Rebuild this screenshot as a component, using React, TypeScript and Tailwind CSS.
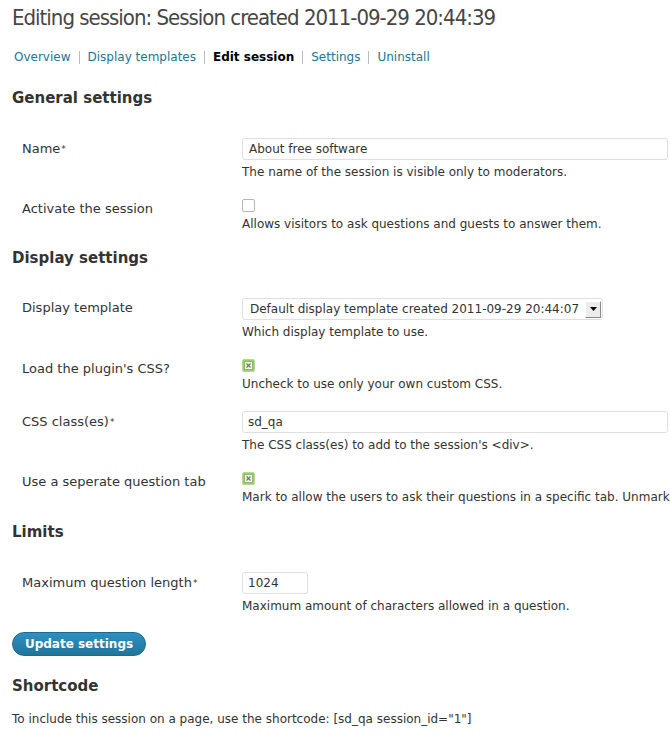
import React from "react";

const font = { fontFamily: '"DejaVu Sans", "Liberation Sans", sans-serif' };
const condensed = { fontFamily: '"DejaVu Sans Condensed", "DejaVu Sans", sans-serif', fontStretch: "condensed" as const };

function Checked() {
  return (
    <svg width="13" height="13" viewBox="0 0 13 13" className="block">
      <rect x="0.5" y="0.5" width="12" height="12" rx="1.5" fill="#9dcc6f" stroke="#b3d98f" />
      <rect x="2.5" y="2.5" width="8" height="8" fill="#f2f7ec" stroke="#7fae57" strokeWidth="0.8" />
      <path d="M4.5 4.5 L8.5 8.5 M8.5 4.5 L4.5 8.5" stroke="#6f6f6f" strokeWidth="1.1" />
    </svg>
  );
}

function Unchecked() {
  return <div className="w-[13px] h-[13px] rounded-[2px] border border-[#b5b5b5] bg-white" />;
}

function Row({
  label,
  req,
  children,
  desc,
  labelTop,
}: {
  label: string;
  req?: boolean;
  children: React.ReactNode;
  desc: string;
  labelTop: string;
}) {
  return (
    <div className="grid grid-cols-[230px_1fr]">
      <div className={`pl-[10px] text-[13px] leading-[16px] text-[#333] whitespace-nowrap ${labelTop}`}>
        {label}
        {req && <sup className="text-[9px] relative -top-[1px] ml-[1px]">*</sup>}
      </div>
      <div>
        {children}
        <div className="text-[12px] text-[#333] whitespace-nowrap mt-[4px] leading-[16px]">{desc}</div>
      </div>
    </div>
  );
}

function Sep() {
  return <span className="mx-[8px] w-[1px] h-[13px] bg-[#bbb] inline-block" />;
}

export default function App() {
  return (
    <div className="w-[670px] h-[750px] bg-white overflow-hidden" style={font}>
      <div className="pl-[12px]">
        <h2
          className="text-[22px] tracking-[-1px] text-[#464646] leading-[30px] pt-[3px] whitespace-nowrap"
          style={condensed}
        >
          Editing session: Session created 2011-09-29 20:44:39
        </h2>
        <div className="mt-[16px] ml-[2px] text-[12px] leading-[16px] whitespace-nowrap flex items-center">
          <span className="text-[#21759b]">Overview</span>
          <Sep />
          <span className="text-[#21759b]">Display templates</span>
          <Sep />
          <span className="font-bold text-black">Edit session</span>
          <Sep />
          <span className="text-[#21759b]">Settings</span>
          <Sep />
          <span className="text-[#21759b]">Uninstall</span>
        </div>

        <h3 className="mt-[24px] text-[15px] font-bold text-[#333] leading-[18px]">General settings</h3>
      </div>

      <div className="pl-[12px] mt-[31px] flex flex-col gap-[19px]">
        <Row label="Name" req desc="The name of the session is visible only to moderators." labelTop="pt-[3px]">
          <div className="h-[22px] w-[426px] border border-[#dfdfdf] rounded-[3px] text-[12px] text-[#333] pl-[6px] leading-[20px]">
            About free software
          </div>
        </Row>
        <Row label="Activate the session" desc="Allows visitors to ask questions and guests to answer them." labelTop="pt-[2px]">
          <Unchecked />
        </Row>
      </div>

      <div className="pl-[12px]">
        <h3 className="mt-[17px] text-[15px] font-bold text-[#333] leading-[18px]">Display settings</h3>
      </div>

      <div className="pl-[12px] mt-[31px] flex flex-col gap-[19px]">
        <Row label="Display template" desc="Which display template to use." labelTop="pt-[2px]">
          <div className="h-[22px] w-[361px] border border-[#dfdfdf] rounded-[3px] text-[12px] text-[#333] pl-[7px] leading-[20px] flex items-center justify-between pr-[1px]">
            <span>Default display template created 2011-09-29 20:44:07</span>
            <div className="w-[16px] h-[17px] bg-[#ececec] border-t border-l border-t-white border-l-white border-r border-b border-r-[#888] border-b-[#888] flex items-center justify-center">
              <svg width="7" height="4" viewBox="0 0 7 4">
                <path d="M0 0 H7 L3.5 4 Z" fill="#000" />
              </svg>
            </div>
          </div>
        </Row>
        <Row label="Load the plugin's CSS?" desc="Uncheck to use only your own custom CSS." labelTop="pt-[2px]">
          <Checked />
        </Row>
        <Row label="CSS class(es)" req desc="The CSS class(es) to add to the session's <div>." labelTop="pt-[3px]">
          <div className="h-[22px] w-[426px] border border-[#dfdfdf] rounded-[3px] text-[12px] text-[#333] pl-[5px] leading-[20px]">
            sd_qa
          </div>
        </Row>
        <Row
          label="Use a seperate question tab"
          desc="Mark to allow the users to ask their questions in a specific tab. Unmark to have the question form placed above the answers."
          labelTop="pt-[2px]"
        >
          <Checked />
        </Row>
      </div>

      <div className="pl-[12px]">
        <h3 className="mt-[18px] text-[15px] font-bold text-[#333] leading-[18px]">Limits</h3>
      </div>

      <div className="pl-[12px] mt-[31px] flex flex-col gap-[19px]">
        <Row label="Maximum question length" req desc="Maximum amount of characters allowed in a question." labelTop="pt-[3px]">
          <div className="h-[22px] w-[66px] border border-[#dfdfdf] rounded-[3px] text-[12px] text-[#333] pl-[5px] leading-[20px]">
            1024
          </div>
        </Row>
      </div>

      <div className="pl-[12px] mt-[18px]">
        <button className="h-[24px] w-[134px] rounded-full bg-gradient-to-b from-[#2e8fc2] to-[#21759b] border border-[#1e6a8d] text-white text-[12px] font-bold block">
          Update settings
        </button>
        <h3 className="mt-[21px] text-[15px] font-bold text-[#333] leading-[18px]">Shortcode</h3>
        <p className="mt-[16px] text-[12px] text-[#333] leading-[16px] whitespace-nowrap">
          To include this session on a page, use the shortcode: [sd_qa session_id="1"]
        </p>
      </div>
    </div>
  );
}
